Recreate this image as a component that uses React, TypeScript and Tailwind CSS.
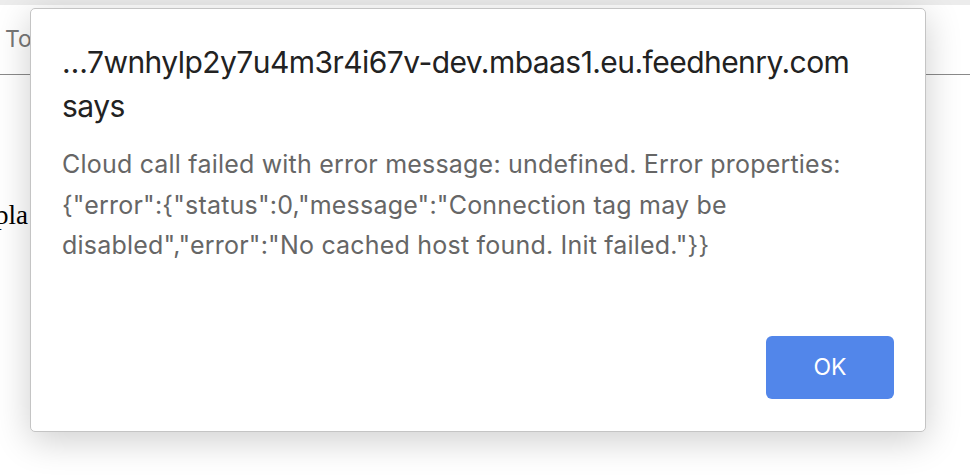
export default function App() {
  return (
    <div className="relative w-[970px] h-[476px] overflow-hidden bg-white" style={{ fontFamily: 'Inter, "Liberation Sans", sans-serif' }}>
      <div className="h-[5px] bg-[#ececec]" />
      <div className="h-[70px] border-b border-[#8a8a8a] flex items-center pl-[5px]">
        <span className="text-[23px] text-[#777]">To</span>
      </div>
      <div className="pt-[122px] text-[27px] leading-[36px] text-black -ml-[5px]" style={{ fontFamily: '"Liberation Serif", serif' }}>
        pla
      </div>

      <div className="absolute left-[30px] top-[8px] w-[896px] h-[424px] bg-white rounded-[5px] border border-[#c4c4c4] shadow-[0_8px_36px_rgba(0,0,0,0.2)] flex flex-col px-[31px] pt-[31px] pb-[32px]">
        <div className="text-[30px] leading-[44px] tracking-[-0.55px] text-[#222]">
          …7wnhylp2y7u4m3r4i67v-dev.mbaas1.eu.feedhenry.com
          <br />
          says
        </div>
        <div className="mt-[16px] text-[25px] leading-[40.5px] tracking-[0.2px] text-[#666] whitespace-nowrap">
          Cloud call failed with error message: undefined. Error properties:
          <br />
          {'{"error":{"status":0,"message":"Connection tag may be'}
          <br />
          {'disabled","error":"No cached host found. Init failed."}}'}
        </div>
        <div className="mt-auto flex justify-end">
          <button className="w-[128px] h-[63px] rounded-[6px] bg-[#5286ea] text-white text-[23px]">OK</button>
        </div>
      </div>
    </div>
  );
}
